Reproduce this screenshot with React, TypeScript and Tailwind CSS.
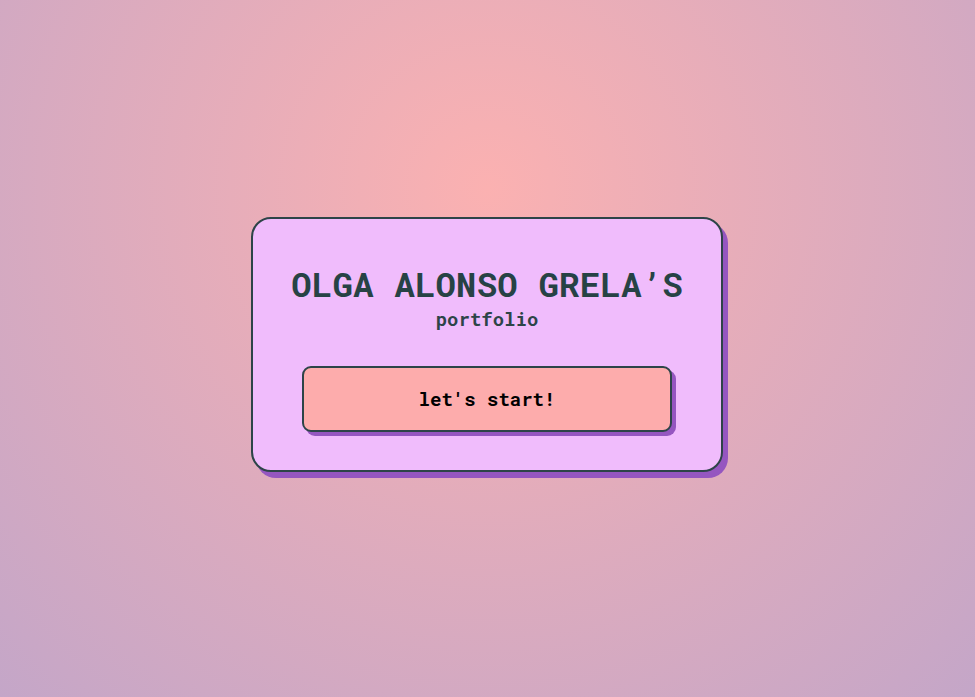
export default function App() {
  return (
    <div className="min-h-screen w-full flex items-center justify-center bg-[radial-gradient(circle_at_50%_27%,#fbb1b1_0%,#c4a6c8_100%)] font-['Roboto_Mono','DejaVu_Sans_Mono',monospace]">
      <div className="w-[472px] h-[255px] flex flex-col items-center bg-[#f0bcfc] border-2 border-[#2d4448] rounded-[20px] shadow-[5px_6px_0_#9556c0] pt-[46px] ml-[-1px] mt-[-8px]">
        <h1 className="text-[34px] leading-[38px] font-bold text-[#274245] tracking-[0.2px]">
          OLGA ALONSO GRELA’S
        </h1>
        <p className="mt-[5px] text-[19px] leading-[22px] font-bold text-[#2d4448]">portfolio</p>
        <button className="mt-[36px] w-[370px] h-[66px] bg-[#fdacac] border-2 border-[#2d4448] rounded-[9px] shadow-[4px_4px_0_#9556c0] text-[19px] font-bold text-black">
          let's start!
        </button>
      </div>
    </div>
  );
}
